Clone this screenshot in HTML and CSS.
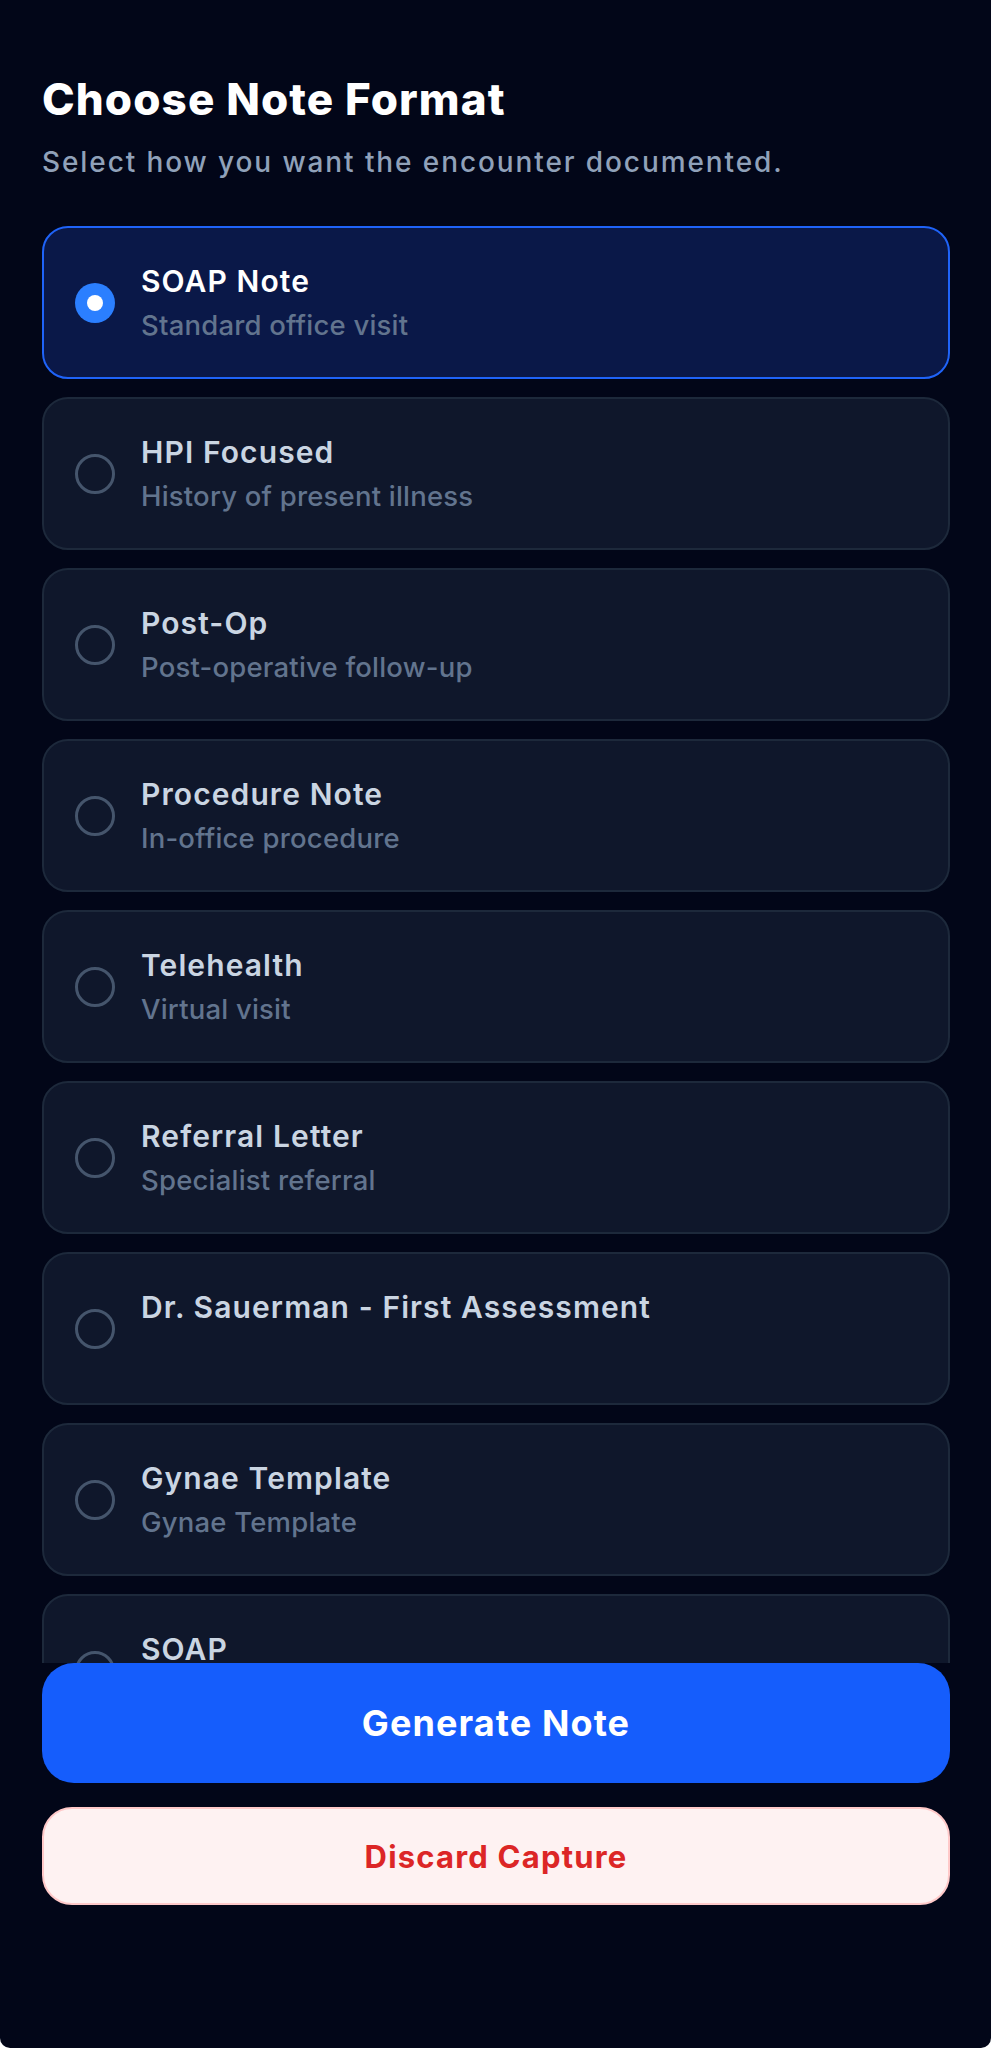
FILE: index.html
```html
<!DOCTYPE html>
<html lang="en">
<head>
<meta charset="utf-8">
<title>Choose Note Format</title>
<link rel="stylesheet" href="styles.css">
</head>
<body>
<div class="screen">
  <header class="head">
    <h1 class="title">Choose Note Format</h1>
    <p class="lead">Select how you want the encounter documented.</p>
  </header>
  <div class="list">
    <div class="opt opt--active">
      <span class="radio radio--on"></span>
      <div class="opt-text"><div class="opt-title">SOAP Note</div><div class="opt-sub">Standard office visit</div></div>
    </div>
    <div class="opt">
      <span class="radio"></span>
      <div class="opt-text"><div class="opt-title">HPI Focused</div><div class="opt-sub">History of present illness</div></div>
    </div>
    <div class="opt">
      <span class="radio"></span>
      <div class="opt-text"><div class="opt-title">Post-Op</div><div class="opt-sub">Post-operative follow-up</div></div>
    </div>
    <div class="opt">
      <span class="radio"></span>
      <div class="opt-text"><div class="opt-title">Procedure Note</div><div class="opt-sub">In-office procedure</div></div>
    </div>
    <div class="opt">
      <span class="radio"></span>
      <div class="opt-text"><div class="opt-title">Telehealth</div><div class="opt-sub">Virtual visit</div></div>
    </div>
    <div class="opt">
      <span class="radio"></span>
      <div class="opt-text"><div class="opt-title">Referral Letter</div><div class="opt-sub">Specialist referral</div></div>
    </div>
    <div class="opt">
      <span class="radio"></span>
      <div class="opt-text"><div class="opt-title">Dr. Sauerman - First Assessment</div><div class="opt-sub"></div></div>
    </div>
    <div class="opt">
      <span class="radio"></span>
      <div class="opt-text"><div class="opt-title">Gynae Template</div><div class="opt-sub">Gynae Template</div></div>
    </div>
    <div class="opt">
      <span class="radio"></span>
      <div class="opt-text"><div class="opt-title">SOAP</div><div class="opt-sub">SOAP</div></div>
    </div>
  </div>
  <div class="actions">
    <button class="btn btn--primary" type="button">Generate Note</button>
    <button class="btn btn--danger" type="button">Discard Capture</button>
  </div>
</div>
</body>
</html>
```
FILE: styles.css
```css
* { box-sizing: border-box; }

html, body {
  margin: 0;
  padding: 0;
  background: #ffffff;
}

body {
  font-family: Inter, "Noto Sans", "Liberation Sans", sans-serif;
}

.screen {
  width: 991px;
  height: 2048px;
  background: #020618;
  border-radius: 0 0 10px 10px;
  padding: 0 41px 0 42px;
  display: flex;
  flex-direction: column;
  overflow: hidden;
}

.head {
  padding-top: 74px;
  margin-bottom: 46px;
  flex: none;
}

.title {
  margin: 0 0 20px;
  font-size: 44px;
  line-height: 50px;
  font-weight: 800;
  color: #ffffff;
  letter-spacing: 1.1px;
}

.lead {
  margin: 0;
  font-size: 28px;
  line-height: 36px;
  font-weight: 500;
  color: #90a1b9;
  letter-spacing: 1.9px;
}

.list {
  flex: 1;
  min-height: 0;
  overflow: hidden;
  display: flex;
  flex-direction: column;
  gap: 18px;
}

.opt {
  flex: none;
  height: 153px;
  display: flex;
  align-items: center;
  padding: 0 31px;
  background: #0f172b;
  border: 2px solid #1d293b;
  border-radius: 26px;
}

.opt--active {
  background: #0a1848;
  border-color: #1f63f8;
}

.radio {
  flex: none;
  width: 40px;
  height: 40px;
  border-radius: 50%;
  border: 3.5px solid #45556c;
  margin-right: 26px;
}

.radio--on {
  border: none;
  background: #2b7fff;
  display: flex;
  align-items: center;
  justify-content: center;
}

.radio--on::after {
  content: "";
  width: 16px;
  height: 16px;
  border-radius: 50%;
  background: #ffffff;
}

.opt-text {
  display: flex;
  flex-direction: column;
}

.opt-title {
  font-size: 30px;
  line-height: 36px;
  font-weight: 600;
  color: #cad5e2;
  margin-bottom: 9px;
  letter-spacing: 1.1px;
}

.opt--active .opt-title {
  color: #ffffff;
}

.opt-sub {
  min-height: 34px;
  font-size: 27.5px;
  line-height: 34px;
  font-weight: 500;
  color: #62748e;
  letter-spacing: 0.2px;
}

.actions {
  flex: none;
  display: flex;
  flex-direction: column;
  gap: 24px;
  padding-bottom: 143px;
}

.btn {
  display: flex;
  align-items: center;
  justify-content: center;
  width: 100%;
  font-family: Inter, "Noto Sans", "Liberation Sans", sans-serif;
  font-weight: 700;
  cursor: pointer;
}

.btn--primary {
  height: 120px;
  border: none;
  border-radius: 32px;
  background: #155dfc;
  color: #ffffff;
  font-size: 36px;
  letter-spacing: 1.1px;
}

.btn--danger {
  height: 98px;
  border: 2px solid #ffc9c9;
  border-radius: 30px;
  background: #fef2f2;
  color: #dc2626;
  font-size: 31px;
  letter-spacing: 1.2px;
}
```
